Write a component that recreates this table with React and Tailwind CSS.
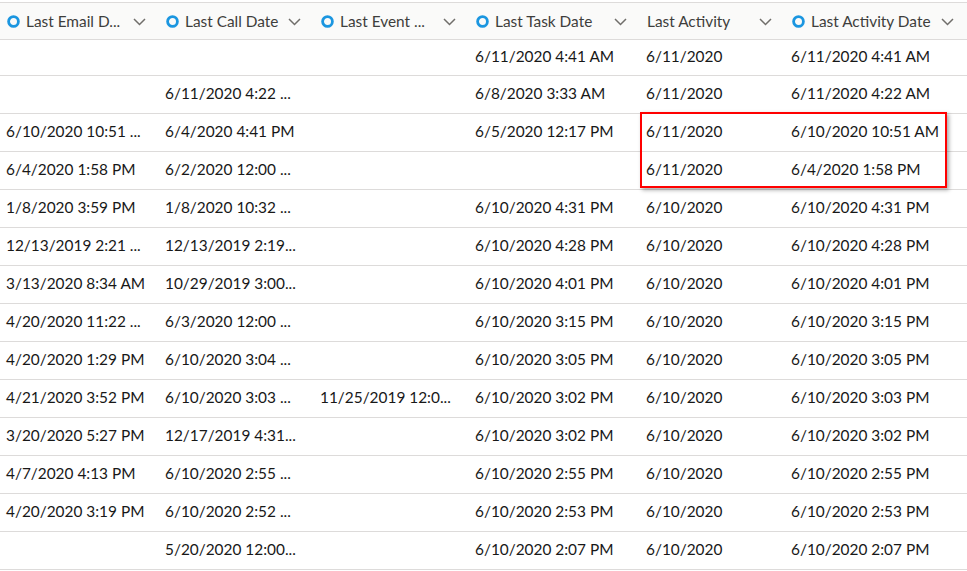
const COLS = [
  { label: 'Last Email D...', icon: true, w: 'w-[159px]' },
  { label: 'Last Call Date', icon: true, w: 'w-[155px]' },
  { label: 'Last Event ...', icon: true, w: 'w-[155px]' },
  { label: 'Last Task Date', icon: true, w: 'w-[171px]' },
  { label: 'Last Activity', icon: false, w: 'w-[145px]' },
  { label: 'Last Activity Date', icon: true, w: 'w-[182px]' },
];

const ROWS = [
  ['', '', '', '6/11/2020 4:41 AM', '6/11/2020', '6/11/2020 4:41 AM'],
  ['', '6/11/2020 4:22 ...', '', '6/8/2020 3:33 AM', '6/11/2020', '6/11/2020 4:22 AM'],
  ['6/10/2020 10:51 ...', '6/4/2020 4:41 PM', '', '6/5/2020 12:17 PM', '6/11/2020', '6/10/2020 10:51 AM'],
  ['6/4/2020 1:58 PM', '6/2/2020 12:00 ...', '', '', '6/11/2020', '6/4/2020 1:58 PM'],
  ['1/8/2020 3:59 PM', '1/8/2020 10:32 ...', '', '6/10/2020 4:31 PM', '6/10/2020', '6/10/2020 4:31 PM'],
  ['12/13/2019 2:21 ...', '12/13/2019 2:19...', '', '6/10/2020 4:28 PM', '6/10/2020', '6/10/2020 4:28 PM'],
  ['3/13/2020 8:34 AM', '10/29/2019 3:00...', '', '6/10/2020 4:01 PM', '6/10/2020', '6/10/2020 4:01 PM'],
  ['4/20/2020 11:22 ...', '6/3/2020 12:00 ...', '', '6/10/2020 3:15 PM', '6/10/2020', '6/10/2020 3:15 PM'],
  ['4/20/2020 1:29 PM', '6/10/2020 3:04 ...', '', '6/10/2020 3:05 PM', '6/10/2020', '6/10/2020 3:05 PM'],
  ['4/21/2020 3:52 PM', '6/10/2020 3:03 ...', '11/25/2019 12:0...', '6/10/2020 3:02 PM', '6/10/2020', '6/10/2020 3:03 PM'],
  ['3/20/2020 5:27 PM', '12/17/2019 4:31...', '', '6/10/2020 3:02 PM', '6/10/2020', '6/10/2020 3:02 PM'],
  ['4/7/2020 4:13 PM', '6/10/2020 2:55 ...', '', '6/10/2020 2:55 PM', '6/10/2020', '6/10/2020 2:55 PM'],
  ['4/20/2020 3:19 PM', '6/10/2020 2:52 ...', '', '6/10/2020 2:53 PM', '6/10/2020', '6/10/2020 2:53 PM'],
  ['', '5/20/2020 12:00...', '', '6/10/2020 2:07 PM', '6/10/2020', '6/10/2020 2:07 PM'],
];

function Ring() {
  return (
    <svg width="13" height="13" viewBox="0 0 13 13" className="shrink-0">
      <circle cx="6.5" cy="6.5" r="4.9" fill="none" stroke="#1b96e0" strokeWidth="2.8" />
    </svg>
  );
}

function Chevron() {
  return (
    <svg width="13" height="8" viewBox="0 0 13 8" className="shrink-0">
      <polyline points="1,1 6.5,6.5 12,1" fill="none" stroke="#706e6b" strokeWidth="1.5" />
    </svg>
  );
}

export default function App() {
  return (
    <div className="relative h-[571px] w-[967px] overflow-hidden bg-white pt-[2px] font-['Lato',sans-serif] text-[15.4px] text-[#181818]">
      {/* header */}
      <div className="flex h-[38px] border-y border-[#dddbda] bg-[#fafaf9] text-[#3e3e3c]">
        {COLS.map((c) => (
          <div key={c.label} className={`${c.w} flex shrink-0 items-center pl-[7px] pr-[13px] pt-[1px]`}>
            {c.icon && <Ring />}
            <span className={`${c.icon ? 'ml-[6px]' : ''} flex-1 truncate whitespace-nowrap`}>{c.label}</span>
            <Chevron />
          </div>
        ))}
      </div>

      {ROWS.map((r, i) => (
        <div key={i} className={`flex border-b border-[#dddbda] ${i === 0 ? 'h-[36px]' : 'h-[38px]'}`}>
          {r.map((v, j) => (
            <div key={j} className={`${COLS[j].w} flex shrink-0 items-center whitespace-nowrap pb-[2px] pl-[6px]`}>
              {v}
            </div>
          ))}
        </div>
      ))}

      {/* highlight box drawn over the grid */}
      <div className="absolute left-[640px] top-[112px] h-[76px] w-[307px] border-2 border-[#ff0000] shadow-[2px_2px_4px_rgba(0,0,0,0.35)]" />
    </div>
  );
}
